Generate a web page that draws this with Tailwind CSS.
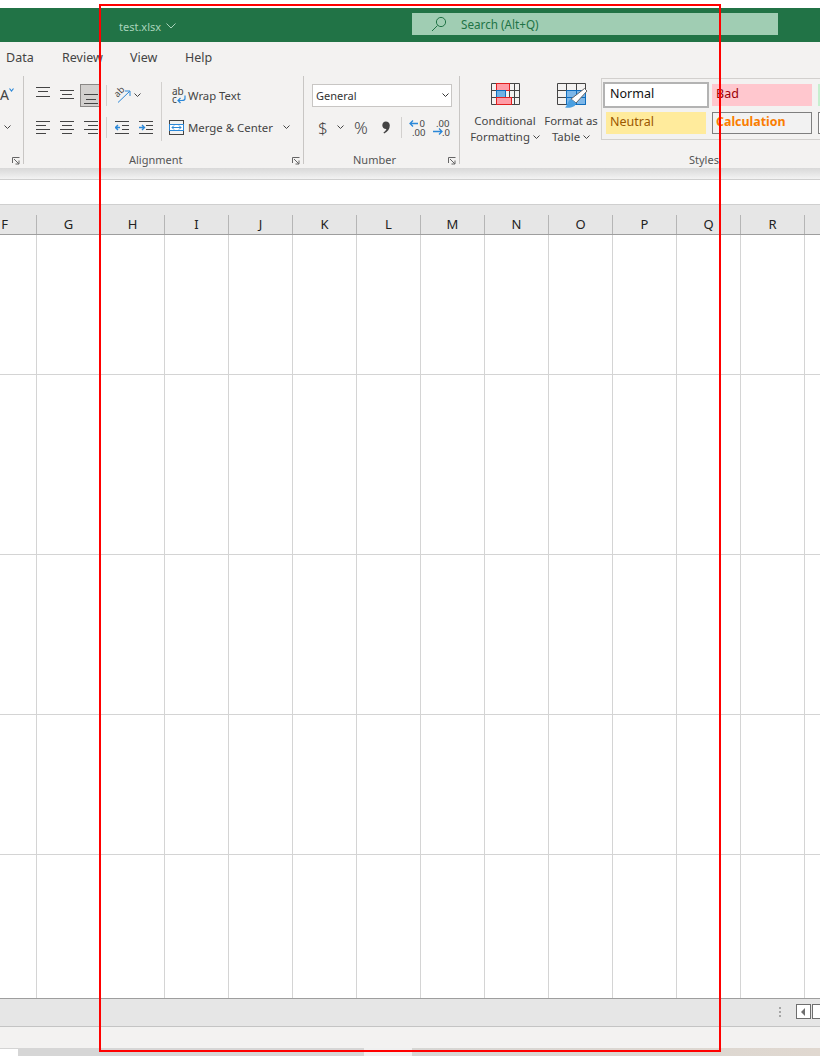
<!doctype html>
<html>
<head>
<meta charset="utf-8">
<script src="https://cdn.jsdelivr.net/npm/@tailwindcss/browser@4"></script>
</head>
<body class="bg-white">
<div class="relative w-[820px] h-[1056px] overflow-hidden flex flex-col bg-white font-['Noto_Sans',sans-serif] text-[#444]">

  <div class="h-[8px] shrink-0 bg-white"></div>

  <!-- title bar -->
  <header class="h-[34px] shrink-0 bg-[#217346] flex items-center">
    <span class="ml-[119px] w-[41px] text-[11px] leading-none text-[#a9d3bb] whitespace-nowrap mt-[2px]">test.xlsx</span>
    <svg class="ml-[6px] mt-[2px] shrink-0" width="10" height="6" viewBox="0 0 10 6" fill="none" stroke="#a9d3bb" stroke-width="1"><path d="M.5.5 5 5 9.5.5"/></svg>
    <div class="ml-[236px] mt-[-2px] w-[366px] h-[22px] shrink-0 bg-[#a0cdb3] flex items-center">
      <svg class="ml-[19px]" width="16" height="16" viewBox="0 0 16 16" fill="none" stroke="#217346" stroke-width="1"><circle cx="10" cy="6" r="4.6"/><path d="M6.5 9.5 1 15"/></svg>
      <span class="ml-[14px] text-[11.7px] leading-none text-[#217346] whitespace-nowrap mt-[2px]">Search (Alt+Q)</span>
    </div>
  </header>

  <!-- ribbon -->
  <section class="h-[126px] shrink-0 bg-[#f3f2f1] flex flex-col">
    <nav class="h-[33px] shrink-0 flex items-center pl-[6px] text-[12.5px] leading-none text-[#444]">
      <span class="w-[56px]">Data</span>
      <span class="w-[68px]">Review</span>
      <span class="w-[55px]">View</span>
      <span>Help</span>
    </nav>
    <div class="flex pt-[1px] w-[820px]">

      <!-- font group (cut off) -->
      <div class="relative w-[24px] shrink-0 h-[88px] border-r border-[#c8c6c4]">
        <span class="absolute left-0 top-[10px] text-[14px] leading-[18px] text-[#444]">A</span>
        <svg class="absolute left-[9px] top-[12px]" width="5" height="4" viewBox="0 0 5 4" fill="none" stroke="#2b88d8" stroke-width="1.2"><path d="M.5.5 2.5 3 4.5.5"/></svg>
        <svg class="absolute left-[4px] top-[49px]" width="7" height="5" viewBox="0 0 7 5" fill="none" stroke="#444" stroke-width="1"><path d="M.5.5 3.5 3.5 6.5.5"/></svg>
        <svg class="absolute left-[12px] top-[81px]" width="8" height="8" viewBox="0 0 8 8" fill="none" stroke="#666" stroke-width="1"><path d="M.5 6V.5H7.5M2 2 7 7M7 3.5V7H3.5"/></svg>
      </div>

      <!-- alignment -->
      <div class="relative w-[280px] shrink-0 h-[88px] border-r border-[#c8c6c4] flex flex-col">
        <div class="flex h-[59px] mt-[6px]">
          <div class="w-[137px] shrink-0 pl-[12px] pt-[2px] flex flex-col gap-[9px]">
            <div class="flex items-center h-[23px]">
              <svg width="14" height="23" viewBox="0 0 14 23" stroke="#444" stroke-width="1"><path d="M0 3.5H14M2 7.5H12M0 12.5H14"/></svg>
              <svg class="ml-[10px]" width="14" height="23" viewBox="0 0 14 23" stroke="#444" stroke-width="1"><path d="M0 6.5H14M2 10.5H12M0 14.5H14"/></svg>
              <div class="ml-[6px] w-[21px] h-[23px] bg-[#d2d0ce] border border-[#8a8886] flex items-center justify-center">
                <svg width="14" height="21" viewBox="0 0 14 21" stroke="#444" stroke-width="1"><path d="M0 9.5H14M2 14.5H12M0 18.5H14"/></svg>
              </div>
              <div class="ml-[5px] w-px h-[21px] bg-[#d2d0ce]"></div>
              <svg class="ml-[7px] overflow-visible" width="17" height="18" viewBox="0 0 17 18" fill="none">
                <text x="0" y="8" transform="rotate(-45 5 5)" font-size="9" fill="#444" font-family="Noto Sans">ab</text>
                <path d="M4 15.5 15.5 4.5M11 4H16V9" stroke="#2b88d8" stroke-width="1"/>
              </svg>
              <svg class="ml-[3px]" width="7" height="5" viewBox="0 0 7 5" fill="none" stroke="#444" stroke-width="1"><path d="M.5.5 3.5 3.5 6.5.5"/></svg>
            </div>
            <div class="flex items-center h-[23px]">
              <svg width="14" height="18" viewBox="0 0 14 18" stroke="#444" stroke-width="1"><path d="M0 2.5H14M0 6.5H10M0 10.5H14M0 14.5H10"/></svg>
              <svg class="ml-[10px]" width="14" height="18" viewBox="0 0 14 18" stroke="#444" stroke-width="1"><path d="M0 2.5H14M2 6.5H12M0 10.5H14M2 14.5H12"/></svg>
              <svg class="ml-[10px]" width="14" height="18" viewBox="0 0 14 18" stroke="#444" stroke-width="1"><path d="M0 2.5H14M4 6.5H14M0 10.5H14M4 14.5H14"/></svg>
              <div class="ml-[8px] w-px h-[21px] bg-[#d2d0ce]"></div>
              <svg class="ml-[8px]" width="14" height="18" viewBox="0 0 14 18" fill="none" stroke-width="1"><path d="M0 2.5H14M7 6.5H14M7 10.5H14M0 14.5H14" stroke="#444"/><path d="M5 8.5H0M3 6 .5 8.5 3 11" stroke="#2b88d8" stroke-width="1.4"/></svg>
              <svg class="ml-[10px]" width="14" height="18" viewBox="0 0 14 18" fill="none" stroke-width="1"><path d="M0 2.5H14M7 6.5H14M7 10.5H14M0 14.5H14" stroke="#444"/><path d="M0 8.5H5M3 6 5.5 8.5 3 11" stroke="#2b88d8" stroke-width="1.4"/></svg>
            </div>
          </div>
          <div class="w-px h-[59px] shrink-0 bg-[#d2d0ce]"></div>
          <div class="flex-1 pt-[2px] flex flex-col gap-[9px]">
            <div class="flex items-center h-[23px] pl-[9px]">
              <svg class="overflow-visible" width="15" height="17" viewBox="0 0 15 17" fill="none">
                <text x="1" y="8" font-size="10" fill="#444" font-family="Noto Sans">ab</text>
                <text x="1" y="15.5" font-size="10" fill="#444" font-family="Noto Sans">c</text>
                <path d="M14 8.5V11.5Q14 13.5 11 13.5H7M9.5 11 7 13.5 9.5 16" stroke="#2b88d8" stroke-width="1.2"/>
              </svg>
              <span class="ml-[2px] text-[11.3px] leading-none whitespace-nowrap">Wrap Text</span>
            </div>
            <div class="flex items-center h-[23px] pl-[7px]">
              <svg width="15" height="15" viewBox="0 0 15 15" fill="none">
                <rect x=".5" y=".5" width="14" height="14" stroke="#444"/>
                <rect x=".5" y="4.5" width="14" height="6" fill="#fff" stroke="#2b88d8"/>
                <path d="M3 7.5H12M5 5.5 3 7.5 5 9.5M10 5.5 12 7.5 10 9.5" stroke="#2b88d8"/>
              </svg>
              <span class="ml-[4px] w-[95px] text-[11.4px] leading-none whitespace-nowrap">Merge &amp; Center</span>
              <svg width="7" height="5" viewBox="0 0 7 5" fill="none" stroke="#444" stroke-width="1"><path d="M.5.5 3.5 3.5 6.5.5"/></svg>
            </div>
          </div>
        </div>
        <div class="absolute left-[105px] top-[77px] text-[11px] leading-[14px] text-[#555] whitespace-nowrap">Alignment</div>
        <svg class="absolute left-[268px] top-[81px]" width="8" height="8" viewBox="0 0 8 8" fill="none" stroke="#666" stroke-width="1"><path d="M.5 6V.5H7.5M2 2 7 7M7 3.5V7H3.5"/></svg>
      </div>

      <!-- number -->
      <div class="relative w-[156px] shrink-0 h-[88px] border-r border-[#c8c6c4] flex flex-col pl-[8px] pt-[8px]">
        <div class="w-[140px] h-[23px] bg-white border border-[#c8c6c4] flex items-center pl-[3px] pr-[2px] justify-between">
          <span class="text-[11px] leading-none text-[#333]">General</span>
          <svg width="7" height="5" viewBox="0 0 7 5" fill="none" stroke="#333" stroke-width="1"><path d="M.5.5 3.5 3.5 6.5.5"/></svg>
        </div>
        <div class="flex items-center h-[23px] mt-[9px]">
          <span class="ml-[6px] w-[10px] text-[17px] leading-none text-[#444] font-light">$</span>
          <svg class="ml-[9px]" width="7" height="5" viewBox="0 0 7 5" fill="none" stroke="#444" stroke-width="1"><path d="M.5.5 3.5 3.5 6.5.5"/></svg>
          <span class="ml-[10px] w-[17px] text-[17px] leading-none text-[#444] font-light">%</span>
          <svg class="ml-[11px]" width="8" height="13" viewBox="0 0 8 13" fill="#444"><path d="M3.8 0.5C6 0.5 7.8 2 7.8 4.6 7.8 8 5.6 11 2.2 12.6L1.4 11.4C3 10.4 4.1 9.3 4.4 8 2.2 8.2.3 6.6.3 4.3.3 2 1.8.5 3.8.5Z"/></svg>
          <div class="ml-[11px] w-px h-[21px] bg-[#d2d0ce]"></div>
          <svg class="ml-[7px] overflow-visible" width="18" height="18" viewBox="0 0 18 18" fill="none">
            <text x="10.5" y="7.5" font-size="9.5" fill="#444" font-family="Noto Sans">0</text>
            <text x="3" y="16.5" font-size="9.5" fill="#444" font-family="Noto Sans">.00</text>
            <path d="M9 4.5H1M4 1.5 1 4.5 4 7.5" stroke="#2b88d8" stroke-width="1.3"/>
          </svg>
          <svg class="ml-[6px] overflow-visible" width="18" height="18" viewBox="0 0 18 18" fill="none">
            <text x="3" y="7.5" font-size="9.5" fill="#444" font-family="Noto Sans">.00</text>
            <text x="9" y="16.5" font-size="9.5" fill="#444" font-family="Noto Sans">.0</text>
            <path d="M0 12.5H9M6 9.5 9 12.5 6 15.5" stroke="#2b88d8" stroke-width="1.3"/>
          </svg>
        </div>
        <div class="absolute left-[49px] top-[77px] text-[11px] leading-[14px] text-[#555] whitespace-nowrap">Number</div>
        <svg class="absolute left-[144px] top-[81px]" width="8" height="8" viewBox="0 0 8 8" fill="none" stroke="#666" stroke-width="1"><path d="M.5 6V.5H7.5M2 2 7 7M7 3.5V7H3.5"/></svg>
      </div>

      <!-- styles -->
      <div class="relative w-[360px] shrink-0 h-[88px] flex">
        <div class="ml-[10px] w-[70px] shrink-0 flex flex-col items-center pt-[7px]">
          <svg width="29" height="23" viewBox="0 0 29 23" fill="none">
            <path d="M.5.5H28.5V21.5H.5ZM.5 7.5H28.5M.5 14.5H28.5M5.5.5V21.5M18.5.5V21.5M23.5.5V21.5" stroke="#444"/>
            <rect x="5.5" y=".5" width="13" height="7" fill="#ff9ca6" stroke="#e02020"/>
            <rect x="5.5" y="7.5" width="9" height="7" fill="#6fb1e4" stroke="#106ebe"/>
            <rect x="5.5" y="14.5" width="15" height="7" fill="#ff9ca6" stroke="#e02020"/>
          </svg>
          <div class="mt-[7px] text-[11.4px] leading-[16px] text-[#444] text-center whitespace-nowrap">Conditional<br>Formatting <svg class="inline-block align-[1px]" width="7" height="5" viewBox="0 0 7 5" fill="none" stroke="#444" stroke-width="1"><path d="M.5.5 3.5 3.5 6.5.5"/></svg></div>
        </div>
        <div class="ml-[1px] w-[60px] shrink-0 flex flex-col items-center pt-[7px]">
          <svg width="31" height="26" viewBox="0 0 31 26" fill="none" class="ml-[3px] mb-[-3px] shrink-0">
            <rect x="10" y="7" width="18" height="15" fill="#7db7e8"/>
            <path d="M.5.5H28.5V21.5H.5ZM.5 7.5H28.5M.5 14.5H28.5M9.5.5V21.5M19.5.5V21.5" stroke="#444"/>
            <path d="M9.5 7.5H28.5V21.5H9.5ZM9.5 14.5H28.5M19.5 7.5V21.5" stroke="#106ebe"/>
            <path d="M14 16 27.5 5.5 30 8 19 20Z" fill="#fff" stroke="#666"/>
            <path d="M14 16C11 17 11 22 8 24.5 13 25.5 19 24 19 20Z" fill="#4a9fe0"/>
          </svg>
          <div class="mt-[7px] text-[11.4px] leading-[16px] text-[#444] text-center whitespace-nowrap">Format as<br>Table <svg class="inline-block align-[1px]" width="7" height="5" viewBox="0 0 7 5" fill="none" stroke="#444" stroke-width="1"><path d="M.5.5 3.5 3.5 6.5.5"/></svg></div>
        </div>
        <div class="mt-[2px] w-[240px] h-[62px] shrink-0 border border-[#d2d0ce] pt-[3px] flex flex-col">
          <div class="flex h-[26px] items-center">
            <div class="ml-[1px] w-[106px] h-[26px] shrink-0 bg-white border-2 border-[#b3b3b3] flex items-center pl-[5px] text-[12.5px] leading-none text-[#111] pb-[1px]">Normal</div>
            <div class="ml-[3px] w-[100px] h-[22px] shrink-0 bg-[#ffc7ce] flex items-center pl-[4px] text-[12.5px] leading-none text-[#9c0006] pb-[1px]">Bad</div>
            <div class="ml-[6px] w-[20px] h-[22px] shrink-0 bg-[#c6efce]"></div>
          </div>
          <div class="flex h-[22px] mt-[4px] items-center">
            <div class="ml-[4px] w-[100px] h-[22px] shrink-0 bg-[#ffeb9c] flex items-center pl-[4px] text-[12.5px] leading-none text-[#9c5700] pb-[1px]">Neutral</div>
            <div class="ml-[6px] w-[100px] h-[22px] shrink-0 bg-[#f2f2f2] border border-[#7f7f7f] flex items-center pl-[3px] text-[12.4px] font-bold leading-none text-[#fa7d00] whitespace-nowrap pb-[1px]">Calculation</div>
            <div class="ml-[6px] w-[20px] h-[22px] shrink-0 bg-white border border-[#7f7f7f]"></div>
          </div>
        </div>
        <div class="absolute left-[229px] top-[77px] text-[11px] leading-[14px] text-[#555] whitespace-nowrap">Styles</div>
      </div>
    </div>
  </section>

  <!-- ribbon shadow -->
  <div class="h-[11px] shrink-0 bg-gradient-to-b from-[#d8d8d8] to-[#f3f3f3]"></div>

  <!-- formula bar -->
  <div class="h-[26px] shrink-0 bg-white border-t border-b border-[#cfcfcf]"></div>

  <!-- column headers -->
  <div class="h-[30px] shrink-0 bg-[#e6e6e6] border-b border-[#9e9e9e] overflow-hidden">
    <div class="ml-[-27px] grid grid-cols-[repeat(14,64px)] h-full pt-[10px] text-[13px] leading-none text-[#222]">
      <div class="border-r border-[#b5b5b5] flex items-center justify-center h-[19px]">F</div>
      <div class="border-r border-[#b5b5b5] flex items-center justify-center h-[19px]">G</div>
      <div class="border-r border-[#b5b5b5] flex items-center justify-center h-[19px]">H</div>
      <div class="border-r border-[#b5b5b5] flex items-center justify-center h-[19px]">I</div>
      <div class="border-r border-[#b5b5b5] flex items-center justify-center h-[19px]">J</div>
      <div class="border-r border-[#b5b5b5] flex items-center justify-center h-[19px]">K</div>
      <div class="border-r border-[#b5b5b5] flex items-center justify-center h-[19px]">L</div>
      <div class="border-r border-[#b5b5b5] flex items-center justify-center h-[19px]">M</div>
      <div class="border-r border-[#b5b5b5] flex items-center justify-center h-[19px]">N</div>
      <div class="border-r border-[#b5b5b5] flex items-center justify-center h-[19px]">O</div>
      <div class="border-r border-[#b5b5b5] flex items-center justify-center h-[19px]">P</div>
      <div class="border-r border-[#b5b5b5] flex items-center justify-center h-[19px]">Q</div>
      <div class="border-r border-[#b5b5b5] flex items-center justify-center h-[19px]">R</div>
      <div class="border-r border-[#b5b5b5] flex items-center justify-center h-[19px]"></div>
    </div>
  </div>

  <!-- cells -->
  <div class="flex-1 flex flex-col bg-white bg-[linear-gradient(to_right,#d4d4d4_1px,transparent_1px)] bg-[length:64px_100%] bg-[position:36px_0]">
    <div class="h-[140px] shrink-0 border-b border-[#d4d4d4]"></div>
    <div class="h-[180px] shrink-0 border-b border-[#d4d4d4]"></div>
    <div class="h-[160px] shrink-0 border-b border-[#d4d4d4]"></div>
    <div class="h-[140px] shrink-0 border-b border-[#d4d4d4]"></div>
    <div class="flex-1"></div>
  </div>

  <!-- sheet bar -->
  <div class="h-[29px] shrink-0 bg-[#e6e6e6] border-t border-b border-t-[#9e9e9e] border-b-[#c4c4c4] flex items-center">
    <div class="ml-[779px] mt-[-2px] shrink-0 flex flex-col gap-[2px]">
      <span class="w-[2px] h-[2px] bg-[#a6a6a6]"></span>
      <span class="w-[2px] h-[2px] bg-[#a6a6a6]"></span>
      <span class="w-[2px] h-[2px] bg-[#a6a6a6]"></span>
    </div>
    <div class="ml-[15px] mt-[-2px] w-[15px] h-[15px] shrink-0 bg-white border border-[#6e6e6e] flex items-center justify-center">
      <svg width="5" height="8" viewBox="0 0 5 8" fill="#6e6e6e"><path d="M4 0V8L0 4Z"/></svg>
    </div>
    <div class="ml-[1px] mt-[-2px] w-[15px] h-[15px] shrink-0 bg-white border border-[#6e6e6e]"></div>
  </div>

  <!-- status bar -->
  <div class="h-[21px] shrink-0 bg-[#f3f2f1]"></div>

  <!-- bottom edge -->
  <div class="h-[8px] shrink-0 flex">
    <div class="w-[18px] bg-white border-t border-[#d4d4d4]"></div>
    <div class="w-[346px] bg-[#d6d6d6]"></div>
    <div class="w-[48px] bg-[#f0f0f0]"></div>
    <div class="flex-1 bg-gradient-to-r from-[#d6d6d4] to-[#e0d8d0]"></div>
  </div>

  <!-- red annotation rectangle -->
  <div class="absolute left-[99px] top-[4px] w-[622px] h-[1048px] border-2 border-[#ff0000] pointer-events-none"></div>
</div>
</body>
</html>
